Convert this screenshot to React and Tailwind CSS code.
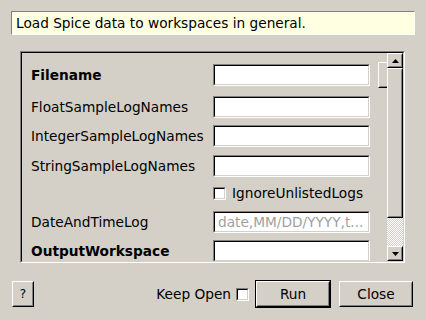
const font = { fontFamily: '"DejaVu Sans", sans-serif' };

function Sunken({ className = "", children }) {
  return (
    <div className={`border border-t-[#808080] border-l-[#808080] border-b-white border-r-white ${className}`}>
      <div className="w-full h-full border border-t-black border-l-black border-b-[#d4d0c8] border-r-[#d4d0c8] bg-white overflow-hidden">
        {children}
      </div>
    </div>
  );
}

function Raised({ className = "", children }) {
  return (
    <div className={`border border-t-white border-l-white border-b-black border-r-black bg-[#d4d0c8] ${className}`}>
      <div className="w-full h-full border border-t-[#d4d0c8] border-l-[#d4d0c8] border-b-[#808080] border-r-[#808080] flex items-center justify-center">
        {children}
      </div>
    </div>
  );
}

function Check({ className = "" }) {
  return (
    <div className={`w-[13px] h-[13px] shrink-0 border border-t-[#808080] border-l-[#808080] border-b-white border-r-white ${className}`}>
      <div className="w-full h-full border border-t-black border-l-black border-b-[#d4d0c8] border-r-[#d4d0c8] bg-white" />
    </div>
  );
}

function Row({ label, bold, mt, children }) {
  return (
    <div className={`flex items-center h-[22px] pl-[9px] ${mt}`}>
      <div className={`w-[182px] shrink-0 text-[13.7px] pt-[1px] whitespace-nowrap ${bold ? "font-bold" : ""}`}>{label}</div>
      {children}
    </div>
  );
}

export default function App() {
  return (
    <div className="w-[426px] h-[320px] bg-[#d4d0c8] text-black overflow-hidden" style={font}>
      {/* description */}
      <div className="ml-[11px] mt-[11px] w-[404px] h-[24px] bg-[#ffffe1] border border-t-[#808080] border-l-[#808080] border-b-white border-r-white flex items-center pl-[4px] text-[13.7px] whitespace-nowrap">
        Load Spice data to workspaces in general.
      </div>

      {/* property panel */}
      <div className="ml-[20px] mt-[16px] w-[385px] h-[212px] border border-t-[#808080] border-l-[#808080] border-b-white border-r-white">
        <div className="w-full h-full border border-t-black border-l-black border-b-[#d4d0c8] border-r-[#d4d0c8] flex">
          <div className="flex-1 overflow-hidden pt-[11px]">
            <Row label="Filename" bold mt="">
              <Sunken className="w-[157px] h-[22px] shrink-0" />
              <Raised className="ml-[8px] w-[80px] h-[26px] shrink-0" />
            </Row>
            <Row label="FloatSampleLogNames" mt="mt-[10px]">
              <Sunken className="w-[157px] h-[22px] shrink-0" />
            </Row>
            <Row label="IntegerSampleLogNames" mt="mt-[7px]">
              <Sunken className="w-[157px] h-[22px] shrink-0" />
            </Row>
            <Row label="StringSampleLogNames" mt="mt-[8px]">
              <Sunken className="w-[157px] h-[22px] shrink-0" />
            </Row>
            <Row label="" mt="mt-[5px]">
              <Check />
              <span className="ml-[6px] pt-[1px] text-[13.7px]">IgnoreUnlistedLogs</span>
            </Row>
            <Row label="DateAndTimeLog" mt="mt-[7px]">
              <Sunken className="w-[157px] h-[22px] shrink-0">
                <div className="pl-[3px] text-[13.7px] text-[#a0a0a0] leading-[18px] whitespace-nowrap">date,MM/DD/YYYY,t...</div>
              </Sunken>
            </Row>
            <Row label="OutputWorkspace" bold mt="mt-[7px]">
              <Sunken className="w-[157px] h-[22px] shrink-0" />
            </Row>
          </div>

          {/* scrollbar */}
          <div className="w-[16px] flex flex-col shrink-0">
            <Raised className="h-[15px] w-full">
              <svg width="7" height="4" viewBox="0 0 7 4"><path d="M3.5 0 L7 4 L0 4 Z" fill="black" /></svg>
            </Raised>
            <Raised className="h-[150px] w-full" />
            <div className="flex-1 bg-[repeating-conic-gradient(#ffffff_0_25%,#d4d0c8_0_50%)] bg-[length:2px_2px]" />
            <Raised className="h-[15px] w-full">
              <svg width="7" height="4" viewBox="0 0 7 4"><path d="M0 0 L7 0 L3.5 4 Z" fill="black" /></svg>
            </Raised>
          </div>
        </div>
      </div>

      {/* buttons */}
      <div className="flex items-center mt-[17px] h-[28px] pl-[12px] pr-[13px] text-[13.7px]">
        <Raised className="w-[22px] h-[26px] mr-auto">
          <span className="text-[12px]">?</span>
        </Raised>
        <span className="whitespace-nowrap">Keep Open</span>
        <Check className="ml-[5px]" />
        <div className="ml-[6px] w-[76px] h-[28px] border border-black">
          <Raised className="w-full h-full">Run</Raised>
        </div>
        <Raised className="ml-[8px] w-[74px] h-[26px]">Close</Raised>
      </div>
    </div>
  );
}
